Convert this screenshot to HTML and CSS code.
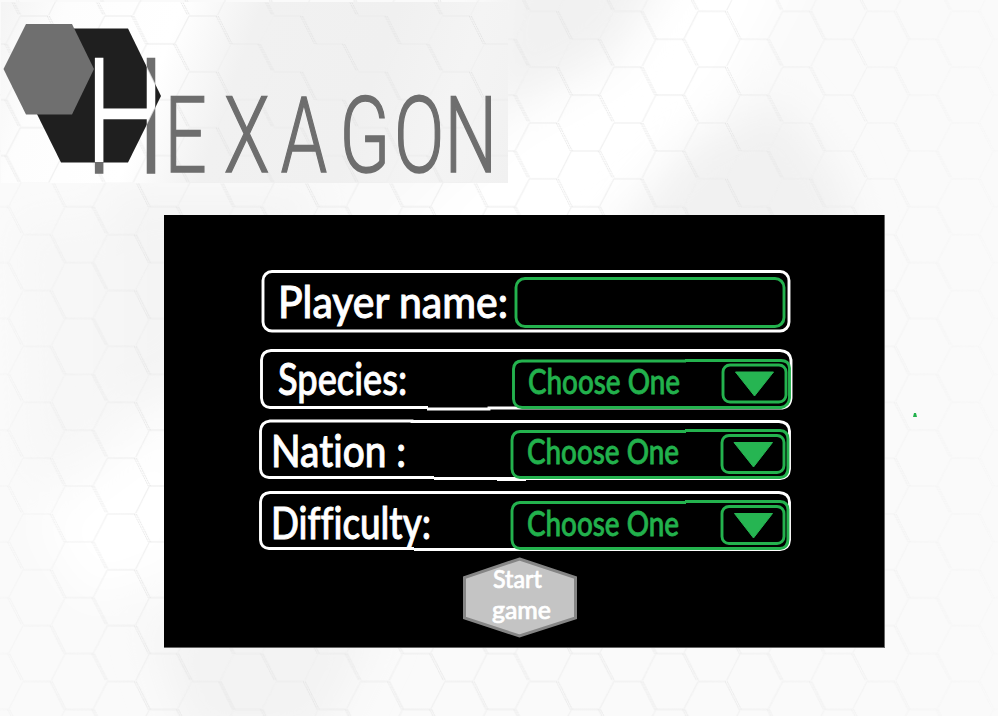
FILE: index.html
```
<!DOCTYPE html>
<html lang="en">
<head>
<meta charset="utf-8">
<title>Hexagon</title>
<link rel="stylesheet" href="styles.css">
</head>
<body>
<svg class="backdrop" width="998" height="716" aria-hidden="true">
  <defs>
    <pattern id="grid" x="20" y="10.3" width="84.4" height="55.85" patternUnits="userSpaceOnUse">
      <path class="edge-flat" d="M3 1H31M45 29H73"/>
      <path class="edge-soft" d="M31 56.8L45 29M73 29L87.4 1M-11.4 29L3 1"/>
      <path class="edge-deep" d="M30 1L44 29M32 1L46 29M72 29L86.4 57M74 29L88.4 57M-12 29L2 57M-10.4 29L4 57"/>
    </pattern>
    <linearGradient id="fade"><stop offset="0" stop-color="#555"/><stop offset=".15" stop-color="#fff"/><stop offset=".7" stop-color="#eee"/><stop offset=".9" stop-color="#777"/><stop offset="1" stop-color="#222"/></linearGradient>
    <mask id="fadeMask"><rect width="998" height="716" fill="url(#fade)"/></mask>
    <filter id="soft" x="-50%" y="-50%" width="200%" height="200%"><feGaussianBlur stdDeviation="20"/></filter>
  </defs>
  <rect width="998" height="716" fill="#fafafa"/>
  <g filter="url(#soft)">
    <path fill="#f1f1f1" d="M500 -40H670L610 50L490 110Z"/>
    <path fill="#fff" d="M690 -40H800L730 90L580 250H380L510 130L620 70Z"/>
    <path fill="#f1f1f1" d="M600 260L690 150L780 100L840 180L860 260Z"/>
    <path fill="#f4f4f4" d="M110 190H330L190 380L100 420Z"/>
    <path fill="#f7f7f7" d="M20 220H120V430L30 480Z"/>
    <path fill="#fff" d="M190 410V560L90 600L40 520Z"/>
    <path fill="#f3f3f3" d="M150 620H380L320 740H190Z"/>
  </g>
  <rect width="998" height="716" fill="url(#grid)" mask="url(#fadeMask)"/>
</svg>

<main class="page">
  <header class="logo">
    <svg width="508" height="183" viewBox="0 0 508 183" role="img" aria-label="Hexagon">
      <defs>
        <linearGradient id="sheen" x1="0" y1="0" x2="508" y2="181" gradientUnits="userSpaceOnUse">
          <stop offset="0" stop-color="#f4f4f4"/><stop offset=".12" stop-color="#fdfdfd"/><stop offset=".32" stop-color="#fff"/><stop offset=".46" stop-color="#f1f1f1"/><stop offset=".7" stop-color="#f0f0f0"/><stop offset=".85" stop-color="#f4f4f4"/><stop offset="1" stop-color="#f1f1f1"/>
        </linearGradient>
        <pattern id="grid2" x="17.3" y="15" width="84.4" height="55.85" patternUnits="userSpaceOnUse">
          <path class="edge-flat" d="M3 1H31M45 29H73"/>
          <path class="edge-soft" d="M31 56.8L45 29M73 29L87.4 1M-11.4 29L3 1"/>
          <path class="edge-deep" d="M30 1L44 29M32 1L46 29M72 29L86.4 57M74 29L88.4 57M-12 29L2 57M-10.4 29L4 57"/>
        </pattern>
        <pattern id="split" width="508" height="183" patternUnits="userSpaceOnUse" patternTransform="scale(1.4286 1)">
          <rect width="508" height="183" fill="#6e6e6e"/>
          <path fill="#fff" d="M61 28.500H128L161 96L128 162H61L28 96Z"/>
        </pattern>
      </defs>
      <rect x="1" y="2" width="507" height="181" fill="url(#sheen)"/>
      <rect x="1" y="2" width="507" height="181" fill="url(#grid2)"/>
      <path fill="#1f1f1f" d="M61 28.500H128L161 96L128 162.500H61L28 96Z"/>
      <path fill="#6f6f6f" d="M26 24H72L94 69L72 114.500H26L3.500 69Z"/>
      <g transform="scale(.7 1)">
        <text class="wordmark" y="172.300"><tspan class="initial" x="122.500">H</tspan><tspan x="235 320 401 485 563 635">EXAGON</tspan></text>
      </g>
    </svg>
  </header>

  <form class="panel">
    <div class="row row-name">
      <svg class="frame" width="532" height="64" aria-hidden="true">
        <rect class="line" x="4" y="2.500" width="526" height="59.500" rx="9"/>
        <rect class="line green" x="257" y="9.500" width="268" height="48" rx="9"/>
      </svg>
      <svg class="label" width="252" height="60"><text x="18" y="48.500" textLength="230" lengthAdjust="spacingAndGlyphs">Player name:</text></svg>
    </div>
    <div class="row row-species">
      <svg class="frame" width="532" height="62" aria-hidden="true">
        <path class="line" d="M169 59.500H11Q3 59 2.500 50V12Q3 3 12 2.500H521Q531 3 532 12V50Q531 60 521 60H230V61H168"/>
        <path class="line green" d="M427 13H263Q255 13 254.500 21V51Q255 59 263 59.500H522Q530 58 530.500 50V20Q530 12.500 522 12.500H426"/>
        <rect class="line green" x="464" y="17" width="63" height="37" rx="7"/>
        <path class="arrow" d="M476.500 24H514.500L495.500 48Z"/>
      </svg>
      <svg class="label" width="252" height="60"><text x="18" y="47" textLength="129" lengthAdjust="spacingAndGlyphs">Species:</text></svg>
      <svg class="choice" width="180" height="48"><text x="16" y="39.500" textLength="152" lengthAdjust="spacingAndGlyphs">Choose One</text></svg>
    </div>
    <div class="row row-nation">
      <svg class="frame" width="532" height="62" aria-hidden="true">
        <path class="line" d="M175 58.500H10Q2 58 1.500 50V12Q2 3 11 2H153V2.500H520Q530 3 530.500 12V50Q530 59 521 59.500H175M238 60.500H267"/>
        <path class="line green" d="M427 12.500H261Q253.500 13 253 21V50Q253.500 58 261 58.500H521Q529 58 529 49V20Q529 12 521 11.500H426"/>
        <rect class="line green" x="463" y="16.500" width="62" height="37" rx="7"/>
        <path class="arrow" d="M475 23.500H513.500L494.500 48Z"/>
      </svg>
      <svg class="label" width="252" height="60"><text x="11" y="47.500" textLength="135" lengthAdjust="spacingAndGlyphs">Nation :</text></svg>
      <svg class="choice" width="180" height="48"><text x="15" y="39" textLength="152" lengthAdjust="spacingAndGlyphs">Choose One</text></svg>
    </div>
    <div class="row row-difficulty">
      <svg class="frame" width="532" height="62" aria-hidden="true">
        <path class="line" d="M155 58.500H10Q2 58 1.500 50V12Q2 3 11 2.500H520Q530 3 530.500 12V50Q530 59 521 59.500H155"/>
        <path class="line green" d="M427 12.500H261Q253.500 13 253 21V50Q253.500 58 261 58.500H521Q529 58 529 49V20Q529 12 521 11.500H426"/>
        <rect class="line green" x="463" y="16.500" width="62" height="37" rx="7"/>
        <path class="arrow" d="M475.500 23.500H513.500L494.500 48Z"/>
      </svg>
      <svg class="label" width="252" height="60"><text x="11" y="49" textLength="160" lengthAdjust="spacingAndGlyphs">Difficulty:</text></svg>
      <svg class="choice" width="180" height="48"><text x="15" y="39.500" textLength="152" lengthAdjust="spacingAndGlyphs">Choose One</text></svg>
    </div>
    <svg class="start" width="116" height="82" viewBox="0 0 116 82" role="button">
      <path fill="#c4c4c4" stroke="#858585" stroke-width="3" d="M57.500 3L113.500 21.500V62L57.500 80L2.500 62V21.500Z"/>
      <text x="31" y="32" textLength="49" lengthAdjust="spacingAndGlyphs">Start</text>
      <text x="30" y="63" textLength="59" lengthAdjust="spacingAndGlyphs">game</text>
    </svg>
  </form>
  <svg class="speck" width="4" height="4" aria-hidden="true"><path fill="#22b14c" d="M1 0H3L4 4H0Z"/></svg>
</main>
</body>
</html>
```
FILE: styles.css
```
body {
  margin: 0;
  background: #fafafa;
  font-family: Lato, "Liberation Sans", sans-serif;
}

svg {
  display: block;
  overflow: visible;
}

.page {
  position: relative;
  width: 998px;
  height: 716px;
  overflow: hidden;
}

.backdrop {
  position: absolute;
  top: 0;
  left: 0;
  overflow: hidden;
}

.edge-flat, .edge-soft, .edge-deep { fill: none; }
.edge-flat { stroke: #ebebeb; stroke-width: 1; }
.edge-soft { stroke: #f0f0f0; stroke-width: 1.2; }
.edge-deep { stroke: #dedede; stroke-width: .7; stroke-dasharray: 2 .7; }

.logo { height: 215px; }

.wordmark {
  font-family: Roboto, "Liberation Sans", sans-serif;
  font-weight: 300;
  font-size: 106px;
  fill: #6e6e6e;
  stroke: #6e6e6e;
  stroke-width: 1.6;
}

.initial {
  font-size: 159px;
  fill: url(#split);
  stroke: url(#split);
  stroke-width: 2.6;
}

.panel {
  box-sizing: border-box;
  width: 721px;
  height: 433px;
  margin-left: 164px;
  padding: 54px 0 0 96px;
  background: #000;
  border-right: 1px solid #666;
  border-bottom: 1px solid #666;
}

.row {
  position: relative;
  display: flex;
  width: 532px;
}

.row-name { height: 79px; }
.row-species { height: 71px; }
.row-nation { height: 71px; }
.row-difficulty { height: 66px; }

.frame {
  position: absolute;
  top: 0;
  left: -1px;
}

.line { fill: none; stroke: #fff; stroke-width: 2.9; }
.green { stroke: #24b24e; }
.arrow { fill: #26b552; stroke: #26b552; stroke-linejoin: round; }

.label, .choice, .start {
  position: relative;
  font-weight: 500;
  font-variant-ligatures: none;
}

.label {
  font-size: 44px;
  fill: #fff;
  stroke: #fff;
  stroke-width: .9;
}

.choice {
  margin-top: 6px;
  font-size: 34px;
  fill: #22b14c;
  stroke: #22b14c;
  stroke-width: .8;
}

.start {
  margin-left: 202px;
  font-size: 25px;
  fill: #fff;
}

.start text {
  stroke: #fff;
  stroke-width: .7;
}

.speck {
  position: absolute;
  left: 913px;
  top: 413px;
}
```
